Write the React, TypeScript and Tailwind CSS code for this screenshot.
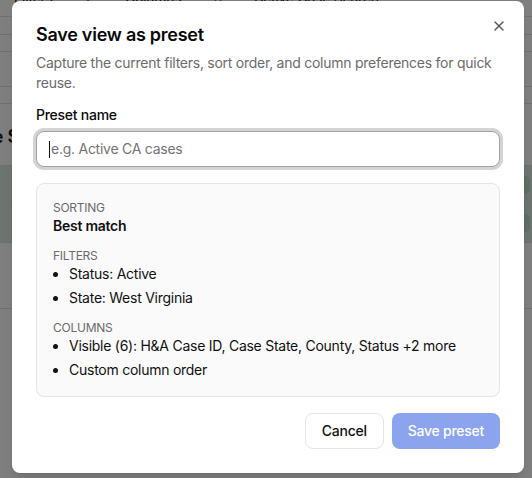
import { X } from "lucide-react";

const filters = ["Status: Active", "State: West Virginia"];
const columns = [
  "Visible (6): H&A Case ID, Case State, County, Status +2 more",
  "Custom column order",
];

function Bullet({ text }: { text: string }) {
  return (
    <li className="flex items-center gap-[11px]">
      <span className="h-[5px] w-[5px] shrink-0 rounded-full bg-[#111]" />
      <span>{text}</span>
    </li>
  );
}

function BackgroundPage() {
  return (
    <div className="flex flex-col bg-white text-sm text-[#111]">
      <div className="flex h-[17px] items-start gap-8 overflow-hidden border-b border-[#e0e0e0] pl-[14px]">
        <span className="-mt-[12px]">Filters</span>
        <span className="-mt-[12px] text-[#2563eb]">2</span>
        <span className="-mt-[12px]">Columns</span>
        <span className="-mt-[12px] text-[#2563eb]">6</span>
        <span className="-mt-[12px]">Active Case Search</span>
      </div>
      <div className="h-[18px] border-b border-[#e0e0e0]" />
      <div className="h-[17px] border-b border-[#e0e0e0]" />
      <div className="h-[35px] border-b border-[#e0e0e0]" />
      <div className="h-[17px] border-b border-[#e0e0e0]" />
      <div className="flex h-[62px] items-center border-b border-[#e0e0e0] pt-[4px]">
        <span className="-ml-[40px] text-lg font-semibold">Case Search</span>
      </div>
      <div className="flex h-[38px] items-center justify-end border-b border-[#e0e0e0] bg-[#dcebe1] pr-[2px]">
        <span className="h-[18px] w-[10px] rounded-full bg-[#bfe0cf]" />
      </div>
      <div className="flex h-[39px] items-center justify-end border-b border-[#e0e0e0] bg-[#dcebe1] pr-[2px]">
        <span className="h-[18px] w-[10px] rounded-full bg-[#bfe0cf]" />
      </div>
      <div className="h-[66px] border-b border-[#e0e0e0]" />
      <div className="h-[170px]" />
    </div>
  );
}

export default function App() {
  return (
    <div className="relative h-[478px] w-[532px] overflow-hidden font-[Inter,sans-serif] tracking-[-0.016em]">
      <BackgroundPage />
      <div className="absolute inset-0 bg-black/50" />

      <div className="absolute left-[12px] top-[1px] w-[512px] rounded-lg bg-white px-6 pb-6 pt-5 shadow-lg">
        <button className="absolute right-[17px] top-[17px] text-[#555]">
          <X className="h-4 w-4" strokeWidth={2} />
        </button>

        <h2 className="text-lg leading-7 font-semibold text-[#0a0a0a]">
          Save view as preset
        </h2>
        <p className="mt-1 text-sm leading-5 text-[#6b6b6b]">
          Capture the current filters, sort order, and column preferences for
          quick reuse.
        </p>

        <div className="mt-3">
          <label className="block text-sm leading-5 font-medium text-[#0a0a0a]">
            Preset name
          </label>
          <div className="mt-1.5 flex h-9 items-center rounded-lg border border-[#a3a3a3] bg-white px-3 ring-[3px] ring-[#d4d4d4]">
            <span className="mr-px h-[17px] w-px bg-[#111]" />
            <span className="text-sm text-[#737373]">e.g. Active CA cases</span>
          </div>
        </div>

        <div className="mt-4 rounded-lg border border-[#e5e5e5] bg-[#fafafa] p-4 text-sm leading-5 text-[#111]">
          <div className="text-xs leading-4 text-[#6b6b6b] uppercase">Sorting</div>
          <div className="font-semibold">Best match</div>

          <div className="mt-3 text-xs leading-4 text-[#6b6b6b] uppercase">Filters</div>
          <ul className="flex flex-col gap-1">
            {filters.map((f) => (
              <Bullet key={f} text={f} />
            ))}
          </ul>

          <div className="mt-3 text-xs leading-4 text-[#6b6b6b] uppercase">Columns</div>
          <ul className="flex flex-col gap-1">
            {columns.map((c) => (
              <Bullet key={c} text={c} />
            ))}
          </ul>
        </div>

        <div className="mt-4 flex justify-end gap-2">
          <button className="h-9 rounded-lg border border-[#e5e5e5] bg-white px-4 text-sm font-medium text-[#111]">
            Cancel
          </button>
          <button className="h-9 rounded-lg bg-[#8ca3ed] px-4 text-sm font-medium text-white">
            Save preset
          </button>
        </div>
      </div>
    </div>
  );
}
